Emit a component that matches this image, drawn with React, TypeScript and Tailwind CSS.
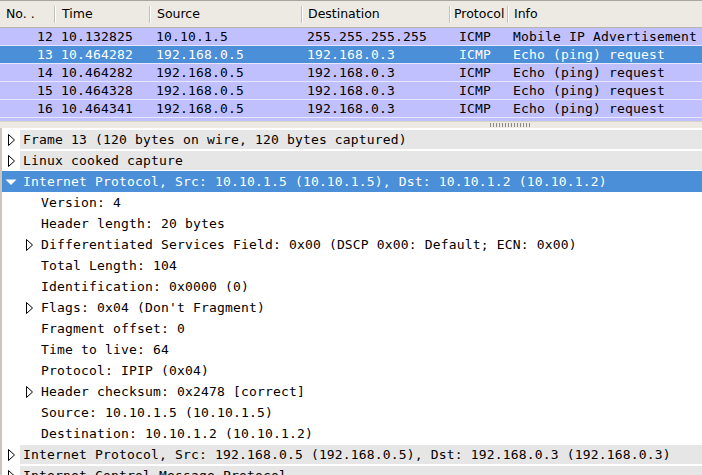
import React from "react";

const mono = { fontFamily: '"DejaVu Sans Mono", monospace' };

type Pkt = { no: string; time: string; src: string; dst: string; proto: string; info: string; sel?: boolean };
const pkts: Pkt[] = [
  { no: "12", time: "10.132825", src: "10.10.1.5", dst: "255.255.255.255", proto: "ICMP", info: "Mobile IP Advertisement" },
  { no: "13", time: "10.464282", src: "192.168.0.5", dst: "192.168.0.3", proto: "ICMP", info: "Echo (ping) request", sel: true },
  { no: "14", time: "10.464282", src: "192.168.0.5", dst: "192.168.0.3", proto: "ICMP", info: "Echo (ping) request" },
  { no: "15", time: "10.464328", src: "192.168.0.5", dst: "192.168.0.3", proto: "ICMP", info: "Echo (ping) request" },
  { no: "16", time: "10.464341", src: "192.168.0.5", dst: "192.168.0.3", proto: "ICMP", info: "Echo (ping) request" },
];

type Node = { text: string; level: number; arrow?: "closed" | "open"; band?: boolean; sel?: boolean };
const nodes: Node[] = [
  { text: "Frame 13 (120 bytes on wire, 120 bytes captured)", level: 0, arrow: "closed", band: true },
  { text: "Linux cooked capture", level: 0, arrow: "closed", band: true },
  { text: "Internet Protocol, Src: 10.10.1.5 (10.10.1.5), Dst: 10.10.1.2 (10.10.1.2)", level: 0, arrow: "open", sel: true },
  { text: "Version: 4", level: 1 },
  { text: "Header length: 20 bytes", level: 1 },
  { text: "Differentiated Services Field: 0x00 (DSCP 0x00: Default; ECN: 0x00)", level: 1, arrow: "closed" },
  { text: "Total Length: 104", level: 1 },
  { text: "Identification: 0x0000 (0)", level: 1 },
  { text: "Flags: 0x04 (Don't Fragment)", level: 1, arrow: "closed" },
  { text: "Fragment offset: 0", level: 1 },
  { text: "Time to live: 64", level: 1 },
  { text: "Protocol: IPIP (0x04)", level: 1 },
  { text: "Header checksum: 0x2478 [correct]", level: 1, arrow: "closed" },
  { text: "Source: 10.10.1.5 (10.10.1.5)", level: 1 },
  { text: "Destination: 10.10.1.2 (10.10.1.2)", level: 1 },
  { text: "Internet Protocol, Src: 192.168.0.5 (192.168.0.5), Dst: 192.168.0.3 (192.168.0.3)", level: 0, arrow: "closed", band: true },
  { text: "Internet Control Message Protocol", level: 0, arrow: "closed", band: true },
];

function Arrow({ kind, sel }: { kind: "closed" | "open"; sel?: boolean }) {
  if (kind === "open") {
    return (
      <svg width="12" height="12" viewBox="0 0 12 12" className="block">
        <polygon points="0.5,3.5 11.5,3.5 6,9" fill={sel ? "#ffffff" : "#000000"} />
      </svg>
    );
  }
  return (
    <svg width="12" height="12" viewBox="0 0 12 12" className="block">
      <polygon points="3.5,0.5 3.5,11.5 9.5,6" fill="#ffffff" stroke="#000000" strokeWidth="1" />
    </svg>
  );
}

function HeaderCell({ label, w, pl, last }: { label: string; w?: string; pl: string; last?: boolean }) {
  return (
    <div className={`relative flex items-center h-full ${w ?? "flex-1"} ${pl}`}>
      <span>{label}</span>
      {!last && <div className="absolute right-0 top-[5px] bottom-[4px] w-[2px] border-l border-[#c5c2b8] bg-[#ffffff]" />}
    </div>
  );
}

export default function App() {
  return (
    <div className="w-[702px] h-[475px] overflow-hidden bg-[#ede9e3] flex flex-col">
      {/* packet list */}
      <div className="flex flex-col border-t border-[#a9a69e] h-[121px] bg-[#ffffff]">
        <div
          className="flex h-[27px] bg-[#ede9e3] border-b border-[#b9b6ad] text-[12.5px] text-black"
          style={{ fontFamily: '"DejaVu Sans", sans-serif' }}
        >
          <HeaderCell label="No. ." w="w-[56px]" pl="pl-[6px]" />
          <HeaderCell label="Time" w="w-[95px]" pl="pl-[6px]" />
          <HeaderCell label="Source" w="w-[152px]" pl="pl-[6px]" />
          <HeaderCell label="Destination" w="w-[148px]" pl="pl-[5px]" />
          <HeaderCell label="Protocol" w="w-[58px]" pl="pl-[3px]" />
          <HeaderCell label="Info" pl="pl-[5px]" last />
        </div>
        <div className="flex flex-col bg-[#c0c0ff] flex-1" style={mono}>
          {pkts.map((p) => (
            <div
              key={p.no}
              className={`flex h-[18px] items-center pt-[1px] border-b border-[#e6e6ff] text-[13px] tracking-[0.17px] whitespace-nowrap ${
                p.sel ? "bg-[#4a8fd7] text-white" : "bg-[#c0c0ff] text-black"
              }`}
            >
              <div className="w-[56px] text-right pr-[3px]">{p.no}</div>
              <div className="w-[95px] pl-[5px]">{p.time}</div>
              <div className="w-[152px] pl-[5px]">{p.src}</div>
              <div className="w-[148px] pl-[4px]">{p.dst}</div>
              <div className="w-[58px] pl-[8px]">{p.proto}</div>
              <div className="flex-1 pl-[4px]">{p.info}</div>
            </div>
          ))}
        </div>
      </div>
      {/* pane separator */}
      <div className="h-[7px] border-t border-[#d8d5cd] bg-[#ede9e3] flex items-center">
        <div className="ml-[490px] w-[40px] h-[4px] bg-[repeating-linear-gradient(90deg,#8c8a84_0px,#8c8a84_1px,transparent_1px,transparent_3px)]" />
      </div>
      {/* details */}
      <div className="flex-1 border-l-2 border-[#c9c5bc] bg-white overflow-hidden pt-[1px]" style={mono}>
        {nodes.map((n, i) => (
          <div
            key={i}
            className={`h-[21px] flex items-center text-[13px] tracking-[0.17px] whitespace-nowrap ${
              n.sel ? "bg-[#4a8fd7] text-white" : "text-black"
            }`}
          >
            <div className={`flex items-center h-[19px] flex-1 ${n.level === 0 ? "pl-0" : "pl-[18px]"}`}>
              <div className="w-[18px] flex justify-center items-center">
                {n.arrow ? <Arrow kind={n.arrow} sel={n.sel} /> : null}
              </div>
              <div className={`flex-1 h-full flex items-center pl-[3px] ${n.band ? "bg-[#e6e6e6]" : ""}`}>{n.text}</div>
            </div>
          </div>
        ))}
      </div>
    </div>
  );
}
